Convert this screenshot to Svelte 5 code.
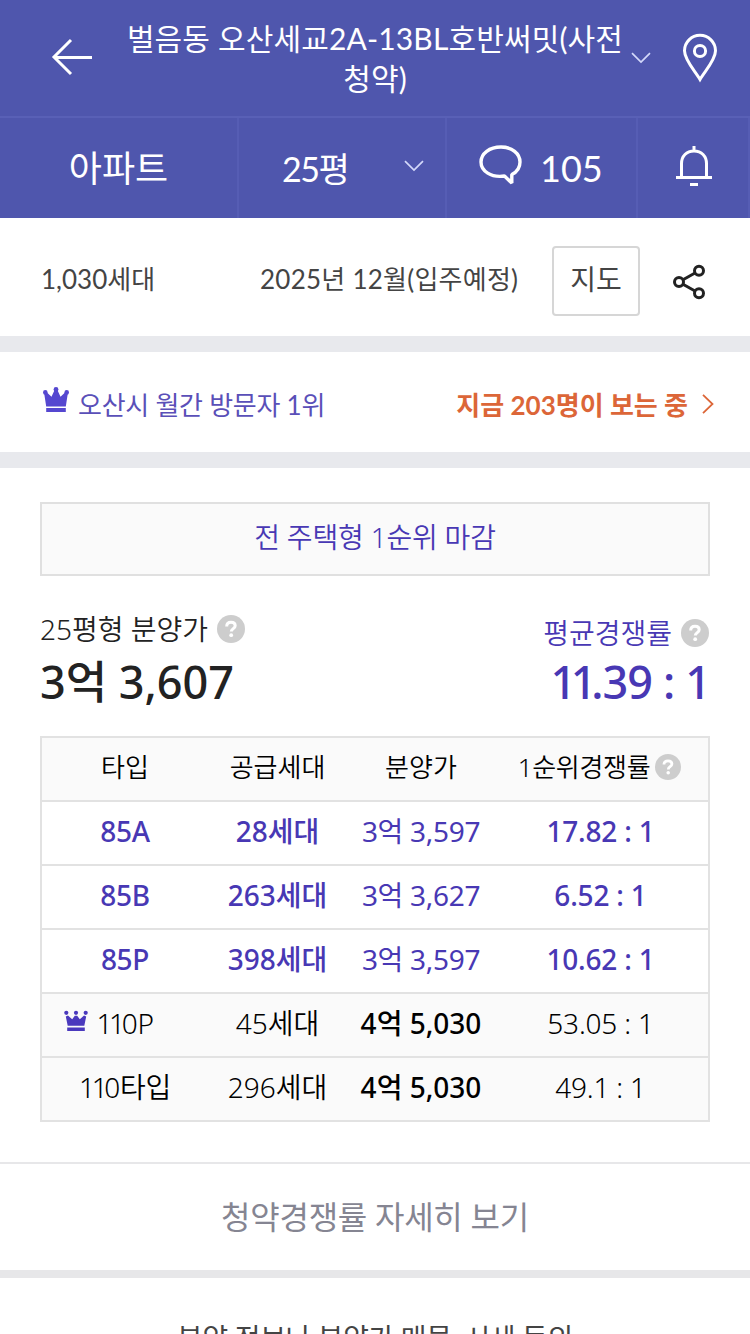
<script>
  const complex = {
    name: '벌음동 오산세교2A-13BL호반써밋(사전',
    nameRest: '청약)',
    type: '아파트',
    area: '25평',
    comments: 105,
    households: '1,030세대',
    moveIn: '2025년 12월(입주예정)'
  };

  const rows = [
    { type: '85A', supply: '28세대', price: '3억 3,597', rate: '17.82 : 1', closed: true },
    { type: '85B', supply: '263세대', price: '3억 3,627', rate: '6.52 : 1', closed: true },
    { type: '85P', supply: '398세대', price: '3억 3,597', rate: '10.62 : 1', closed: true },
    { type: '110P', supply: '45세대', price: '4억 5,030', rate: '53.05 : 1', top: true },
    { type: '110타입', supply: '296세대', price: '4억 5,030', rate: '49.1 : 1' }
  ];

  // runs of "1" are set tighter than the other digits
  const split = (text) => text.split(/(11)/).filter((part) => part);
</script>

{#snippet tight(text)}
  <span>{#each split(text) as part}<span class:ones={part === '11'}>{part}</span>{/each}</span>
{/snippet}

{#snippet help(size)}
  <svg class="help" width={size} height={size} viewBox="0 0 28 28">
    <circle cx="14" cy="14" r="14" fill="#cdcdcd" />
    <path d="M9.7 11.4c0-2.6 1.8-4.1 4.3-4.1 2.4 0 4.2 1.3 4.2 3.5 0 2.9-3.9 2.8-3.9 5.8" fill="none" stroke="#fff" stroke-width="3" />
    <circle cx="14.2" cy="20.2" r="1.9" fill="#fff" />
  </svg>
{/snippet}

{#snippet chevron()}
  <svg class="chevron" width="20" height="12" viewBox="0 0 20 12">
    <path d="M1 1.2 L10 10 L19 1.2" fill="none" stroke="#d3d8fa" stroke-width="1.7" />
  </svg>
{/snippet}

<main>
  <header>
    <div class="title-bar">
      <svg class="back" width="42" height="38" viewBox="0 0 42 38">
        <path d="M20 2 L3 19 L20 36 M3 19.5 H41" fill="none" stroke="#fff" stroke-width="3" />
      </svg>
      <h1>{complex.name}<br />{complex.nameRest}</h1>
      {@render chevron()}
      <svg class="pin" width="36" height="50" viewBox="0 0 36 50">
        <path d="M18 46.5 C13 38 2.5 27 2.5 17.8 A15.5 15.5 0 0 1 33.5 17.8 C33.5 27 23 38 18 46.5 Z" fill="none" stroke="#fff" stroke-width="3" />
        <circle cx="18" cy="18" r="5.6" fill="none" stroke="#fff" stroke-width="3" />
      </svg>
    </div>
    <nav>
      <div class="tab kind">{complex.type}</div>
      <div class="tab area"><span>{complex.area}</span>{@render chevron()}</div>
      <div class="tab talk">
        <svg width="44" height="42" viewBox="0 0 44 42">
          <path d="M32.8 38 L25.5 31 C12 33 2 26 2 17 C2 8.5 10.5 2 22 2 C33 2 41 8.5 41 17 C41 22.5 38 27 32.8 29.5 Z" fill="none" stroke="#fff" stroke-width="3.4" stroke-linejoin="bevel" />
        </svg>
        <span>{complex.comments}</span>
      </div>
      <div class="tab bell">
        <svg width="36" height="42" viewBox="0 0 36 42">
          <path d="M5.5 32 V17.5 C5.5 10 10.5 5 18 5 C25.5 5 30.5 10 30.5 17.5 V32 M0 31.5 H36 M18 5 V0 M14 38.5 H22" fill="none" stroke="#fff" stroke-width="3" />
        </svg>
      </div>
    </nav>
  </header>

  <section class="info">
    <span class="households">{complex.households}</span>
    <span class="move-in">{complex.moveIn}</span>
    <button class="map">지도</button>
    <svg width="34" height="36" viewBox="0 0 34 36">
      <g fill="none" stroke="#222" stroke-width="3">
        <path d="M10 15.7 L22 9 M10 20.3 L22 27" />
        <circle cx="6" cy="18" r="4.5" />
        <circle cx="26" cy="6.7" r="4.5" />
        <circle cx="26" cy="29.3" r="4.5" />
      </g>
    </svg>
  </section>

  <section class="rank">
    <svg width="26" height="26" viewBox="0 0 26 26" fill="#5547d0">
      <path d="M1.2 6.5 L3.4 5 L8.5 9.8 L11.8 2.5 H14.2 L17.5 9.8 L22.6 5 L24.8 6.5 L22.8 19.5 H3.2 Z M3.2 21 H22.8 V25 H3.2 Z" />
      <circle cx="2.3" cy="5.4" r="2.3" />
      <circle cx="13" cy="2.4" r="2.4" />
      <circle cx="23.7" cy="5.4" r="2.3" />
    </svg>
    <span class="visitors">오산시 월간 방문자 1위</span>
    <span class="watching">지금 203명이 보는 중</span>
    <svg width="12" height="20" viewBox="0 0 12 20">
      <path d="M1 0.8 L10.5 10 L1 19.2" fill="none" stroke="#dc6638" stroke-width="1.8" />
    </svg>
  </section>

  <section class="detail">
    <div class="notice">전 주택형 1순위 마감</div>

    <div class="summary">
      <div class="price">
        <p class="label">25평형 분양가 {@render help(28)}</p>
        <strong>3억 3,607</strong>
      </div>
      <div class="rate">
        <p class="label">평균경쟁률 {@render help(28)}</p>
        <strong>{@render tight('11.39 : 1')}</strong>
      </div>
    </div>

    <div class="table">
      <div class="row head">
        <span>타입</span>
        <span>공급세대</span>
        <span>분양가</span>
        <span class="with-help">1순위경쟁률 {@render help(26)}</span>
      </div>
      {#each rows as row}
        <div class="row" class:closed={row.closed}>
          <span class="type">
            {#if row.top}
              <svg class="crown" width="24" height="22" viewBox="0 0 24 22" fill="#4a39bd">
                <path d="M1.8 6.5 L4 5.6 L8.2 9.3 L10.8 5.8 H13.2 L15.8 9.3 L20 5.6 L22.2 6.5 L20.3 15.8 H3.7 Z M3.2 17.4 H20.8 V21 H3.2 Z" />
                <circle cx="2.3" cy="2.8" r="2.1" />
                <circle cx="12" cy="2.8" r="2.1" />
                <circle cx="21.7" cy="2.8" r="2.1" />
              </svg>
            {/if}
            {@render tight(row.type)}
          </span>
          <span class="supply">{row.supply}</span>
          <span class="cost">{row.price}</span>
          <span class="ratio">{row.rate}</span>
        </div>
      {/each}
    </div>
  </section>

  <button class="more">청약경쟁률 자세히 보기</button>

  <section class="next">분양 정보나 분양가 매물, 시세 등의</section>
</main>

<style>
  :global(body) {
    background: #fff;
    overflow: hidden;
  }

  main {
    width: 750px;
    height: 1334px;
    overflow: hidden;
    font-family: Lato, 'Noto Sans CJK KR', sans-serif;
    color: #444;
    white-space: nowrap;
  }

  h1, p {
    margin: 0;
    font-weight: 400;
  }

  svg {
    display: block;
    flex: none;
  }

  button {
    display: block;
    margin: 0;
    padding: 0;
    font-family: inherit;
    color: inherit;
    background: none;
    box-sizing: border-box;
  }

  header {
    height: 218px;
    color: #fff;
    background: #4f56ad;
  }

  .title-bar {
    display: flex;
    box-sizing: border-box;
    height: 118px;
    padding-left: 51px;
    border-bottom: 2px solid #5960b6;
  }
  .title-bar .back {
    margin-top: 38px;
  }
  .title-bar h1 {
    width: 500px;
    margin: 18px 0 0 32px;
    font-size: 30px;
    line-height: 40px;
    letter-spacing: 0.15px;
    text-align: center;
  }
  .title-bar .chevron {
    margin: 52px 0 0 6px;
  }
  .title-bar .pin {
    margin: 33px 0 0 31px;
  }

  nav {
    display: flex;
    height: 100px;
    font-size: 36px;
    line-height: 100px;
  }
  .tab {
    display: flex;
    box-sizing: border-box;
    border-right: 2px solid #565db4;
  }
  .kind {
    width: 239px;
    justify-content: center;
  }
  .area {
    width: 208px;
    padding-left: 43px;
    font-size: 34px;
    line-height: 102px;
    letter-spacing: -1.5px;
  }
  .area span {
    width: 122px;
  }
  .area .chevron {
    margin-top: 42px;
  }
  .talk {
    width: 191px;
    padding-left: 32px;
  }
  .talk svg {
    margin: 27px 17px 0 0;
  }
  .bell {
    width: 112px;
    padding-left: 38px;
  }
  .bell svg {
    margin-top: 28px;
  }

  .info {
    display: flex;
    height: 118px;
    padding-left: 41px;
    font-size: 26px;
    line-height: 122px;
    border-bottom: 16px solid #e8e9ed;
  }
  .households {
    width: 219px;
  }
  .move-in {
    width: 292px;
    letter-spacing: 0.25px;
  }
  .map {
    width: 88px;
    height: 70px;
    margin: 28px 33px 0 0;
    font-size: 28px;
    line-height: 60px;
    padding-bottom: 4px;
    border: 2px solid #d6d6d6;
    border-radius: 4px;
  }
  .info svg {
    margin-top: 46px;
  }

  .rank {
    display: flex;
    height: 100px;
    padding: 0 36px 0 43px;
    font-size: 26px;
    line-height: 106px;
    border-bottom: 16px solid #e8e9ed;
  }
  .rank svg:first-child {
    margin: 35px 9px 0 0;
  }
  .rank svg:last-child {
    margin: 42px 0 0 14px;
  }
  .visitors {
    color: #5a4fb8;
    letter-spacing: -0.25px;
  }
  .watching {
    margin-left: auto;
    font-weight: 700;
    color: #dc6638;
  }

  .detail {
    height: 694px;
    box-sizing: border-box;
    padding: 34px 40px 0;
    font-family: 'Noto Sans', 'Noto Sans CJK KR', sans-serif;
    font-weight: 350;
  }
  .notice {
    height: 70px;
    font-size: 28px;
    line-height: 66px;
    letter-spacing: -0.2px;
    color: #4838b4;
    text-align: center;
    background: #fafafa;
    border: 2px solid #e0e0e0;
  }

  .summary {
    display: flex;
    justify-content: space-between;
    height: 160px;
  }
  .label {
    display: flex;
    align-items: center;
    gap: 9px;
    font-size: 28px;
    font-weight: 350;
    line-height: 40px;
  }
  .price {
    padding-top: 33px;
    color: #222;
  }
  .rate {
    padding-top: 37px;
    color: #4838b4;
    text-align: right;
  }
  .rate .label {
    justify-content: flex-end;
    padding-right: 1px;
  }
  .summary strong {
    display: block;
    font-size: 45px;
    font-weight: 500;
    line-height: 60px;
  }
  .price strong {
    margin-top: 3px;
  }
  .rate strong {
    margin-top: -1px;
    letter-spacing: -0.9px;
  }
  .ones {
    letter-spacing: -0.12em;
  }

  .table {
    border: 2px solid #e2e2e2;
    border-bottom: none;
  }
  .row {
    display: grid;
    grid-template-columns: 166px 139px 148px 211px;
    align-items: start;
    height: 62px;
    font-size: 28px;
    line-height: 58px;
    color: #000;
    text-align: center;
    background: #fafafa;
    border-bottom: 2px solid #e2e2e2;
  }
  .head {
    font-size: 26px;
  }
  .row .with-help,
  .type {
    display: flex;
    justify-content: center;
    align-items: center;
    gap: 5px;
    letter-spacing: -0.3px;
  }
  .row .with-help {
    margin-left: -2px;
  }
  .crown {
    margin: 0 3px 4px -32px;
  }
  .cost {
    font-weight: 500;
  }
  .closed {
    color: #4838b4;
    background: #fff;
  }
  .closed .type,
  .closed .supply,
  .closed .ratio {
    font-weight: 500;
  }
  .ratio {
    letter-spacing: -0.2px;
  }
  .closed .cost {
    font-weight: 400;
    letter-spacing: -0.3px;
  }

  .more {
    width: 100%;
    height: 116px;
    font-size: 32px;
    line-height: 104px;
    letter-spacing: -0.25px;
    color: #858592;
    border: solid #e7e7e9;
    border-width: 2px 0 8px;
  }

  .next {
    padding-top: 40px;
    font-size: 28px;
    line-height: 40px;
    letter-spacing: -0.35px;
    text-align: center;
  }
</style>
